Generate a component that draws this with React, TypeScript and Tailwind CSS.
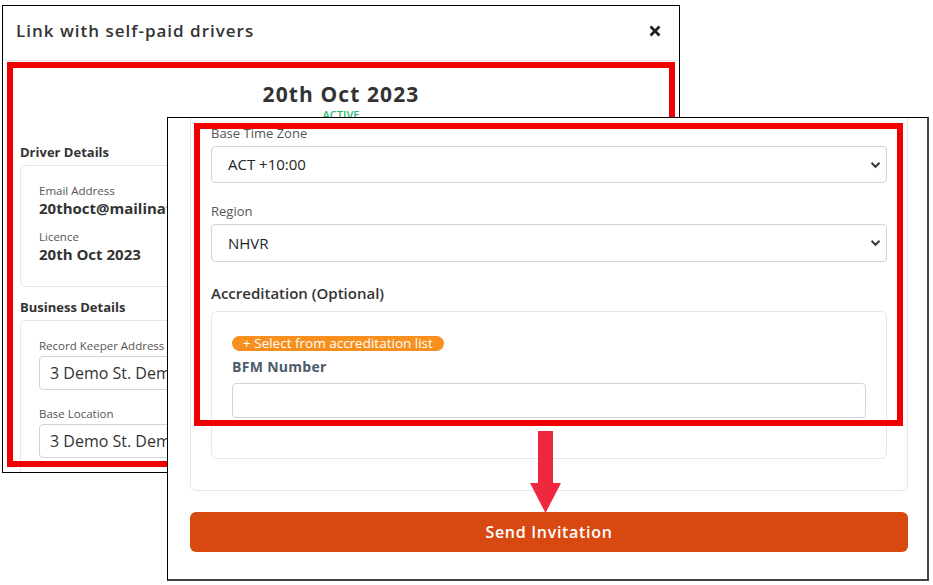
import React from "react";

const Chevron = () => (
  <svg width="11" height="8" viewBox="0 0 11 8" fill="none">
    <path d="M1.5 1.8 5.5 5.8 9.5 1.8" stroke="#343a40" strokeWidth="2" />
  </svg>
);

const Select = ({ value, h }: { value: string; h: string }) => (
  <div
    className={`flex items-center justify-between rounded border border-[#ced4da] pl-[16px] pr-[5px] text-[15px] text-[#212529] ${h}`}
  >
    <span>{value}</span>
    <Chevron />
  </div>
);

const BackWindow = () => (
  <div className="absolute left-[2px] top-[5px] w-[678px] h-[468px] border border-black bg-white overflow-hidden">
    <div className="flex items-center justify-between h-[55px] pb-[4px] pl-[13px] pr-[18px] border-b border-gray-200">
      <h2 className="text-[17px] font-semibold tracking-[1px] text-[#333]">Link with self-paid drivers</h2>
      <svg width="12" height="12" viewBox="0 0 12 12">
        <path d="M1.5 1.5 10.5 10.5M10.5 1.5 1.5 10.5" stroke="#222" strokeWidth="2.8" />
      </svg>
    </div>
    <div className="px-[17px] pt-[19px]">
      <div className="text-center">
        <div className="text-[21px] leading-[28px] font-bold tracking-[1.1px] text-[#333]">20th Oct 2023</div>
        <div className="text-[11px] leading-[14px] font-semibold text-[#2bbd6e]">ACTIVE</div>
      </div>
      <div className="mt-[21px] text-[13px] leading-[18px] font-bold text-[#333]">Driver Details</div>
      <div className="mt-[4px] rounded-md border border-gray-200 pl-[18px] pt-[17px] pb-[22px]">
        <div className="text-[11.5px] leading-[15px] text-[#555]">Email Address</div>
        <div className="text-[15px] leading-[20px] font-bold text-[#333]">20thoct@mailinator.com</div>
        <div className="mt-[11px] text-[11.5px] leading-[15px] text-[#555]">Licence</div>
        <div className="text-[15px] leading-[20px] font-bold text-[#333]">20th Oct 2023</div>
      </div>
      <div className="mt-[11px] text-[13px] leading-[18px] font-bold text-[#333]">Business Details</div>
      <div className="mt-[4px] rounded-md border border-gray-200 px-[18px] pt-[17px] pb-[22px]">
        <div className="text-[11.5px] leading-[15px] text-[#555]">Record Keeper Address</div>
        <div className="mt-[3px] flex items-center h-[34px] rounded border border-[#ced4da] px-[10px] text-[16px] text-[#333]">
          3 Demo St. Demo City
        </div>
        <div className="mt-[16px] text-[11.5px] leading-[15px] text-[#555]">Base Location</div>
        <div className="mt-[3px] flex items-center h-[34px] rounded border border-[#ced4da] px-[10px] text-[16px] text-[#333]">
          3 Demo St. Demo City
        </div>
      </div>
    </div>
  </div>
);

const FrontWindow = () => (
  <div className="absolute left-[167px] top-[117px] w-[762px] h-[464px] border border-black border-r-2 border-b-2 border-r-[#444] border-b-[#444] bg-white overflow-hidden pl-[22px] pr-[19px]">
    <div className="-mt-[10px] rounded-md border border-gray-200 px-[20px] pt-[15px] pb-[31px]">
      <div className="text-[13px] leading-[19px] text-[#555]">Base Time Zone</div>
      <div className="mt-[3px]">
        <Select value="ACT +10:00" h="h-[37px]" />
      </div>
      <div className="mt-[19px] text-[13px] leading-[19px] text-[#555]">Region</div>
      <div className="mt-[3px]">
        <Select value="NHVR" h="h-[38px]" />
      </div>
      <div className="mt-[21px] text-[15px] leading-[20px] font-semibold text-[#333]">Accreditation (Optional)</div>
      <div className="mt-[8px] rounded-md border border-gray-200 px-[20px] pt-[24px] pb-[40px]">
        <div className="flex w-fit items-center h-[15px] px-[11px] rounded-full bg-[#f7901e] text-white text-[13.5px] leading-none">
          + Select from accreditation list
        </div>
        <div className="mt-[7px] text-[14px] leading-[18px] font-bold tracking-[0.3px] text-[#4b5b6b]">BFM Number</div>
        <div className="mt-[7px] h-[35px] rounded border border-[#ced4da]" />
      </div>
    </div>
    <button className="mt-[21px] w-full h-[40px] rounded-md bg-[#d84811] text-white text-[16px] font-semibold tracking-[0.7px]">
      Send Invitation
    </button>
  </div>
);

export default function App() {
  return (
    <div className="relative w-[933px] h-[585px] bg-white overflow-hidden font-['Open_Sans',sans-serif]">
      <BackWindow />
      <div className="absolute left-[7px] top-[62px] w-[668px] h-[405px] border-[6px] border-[#f00000]" />
      <FrontWindow />
      <div className="absolute left-[194px] top-[123px] w-[709px] h-[303px] border-[6px] border-[#f00000]" />
      <svg className="absolute left-[530px] top-[431px]" width="31" height="83" viewBox="0 0 31 83">
        <path d="M8 0h15v52h8L15.5 82 0 52h8z" fill="#f0283f" />
      </svg>
    </div>
  );
}
